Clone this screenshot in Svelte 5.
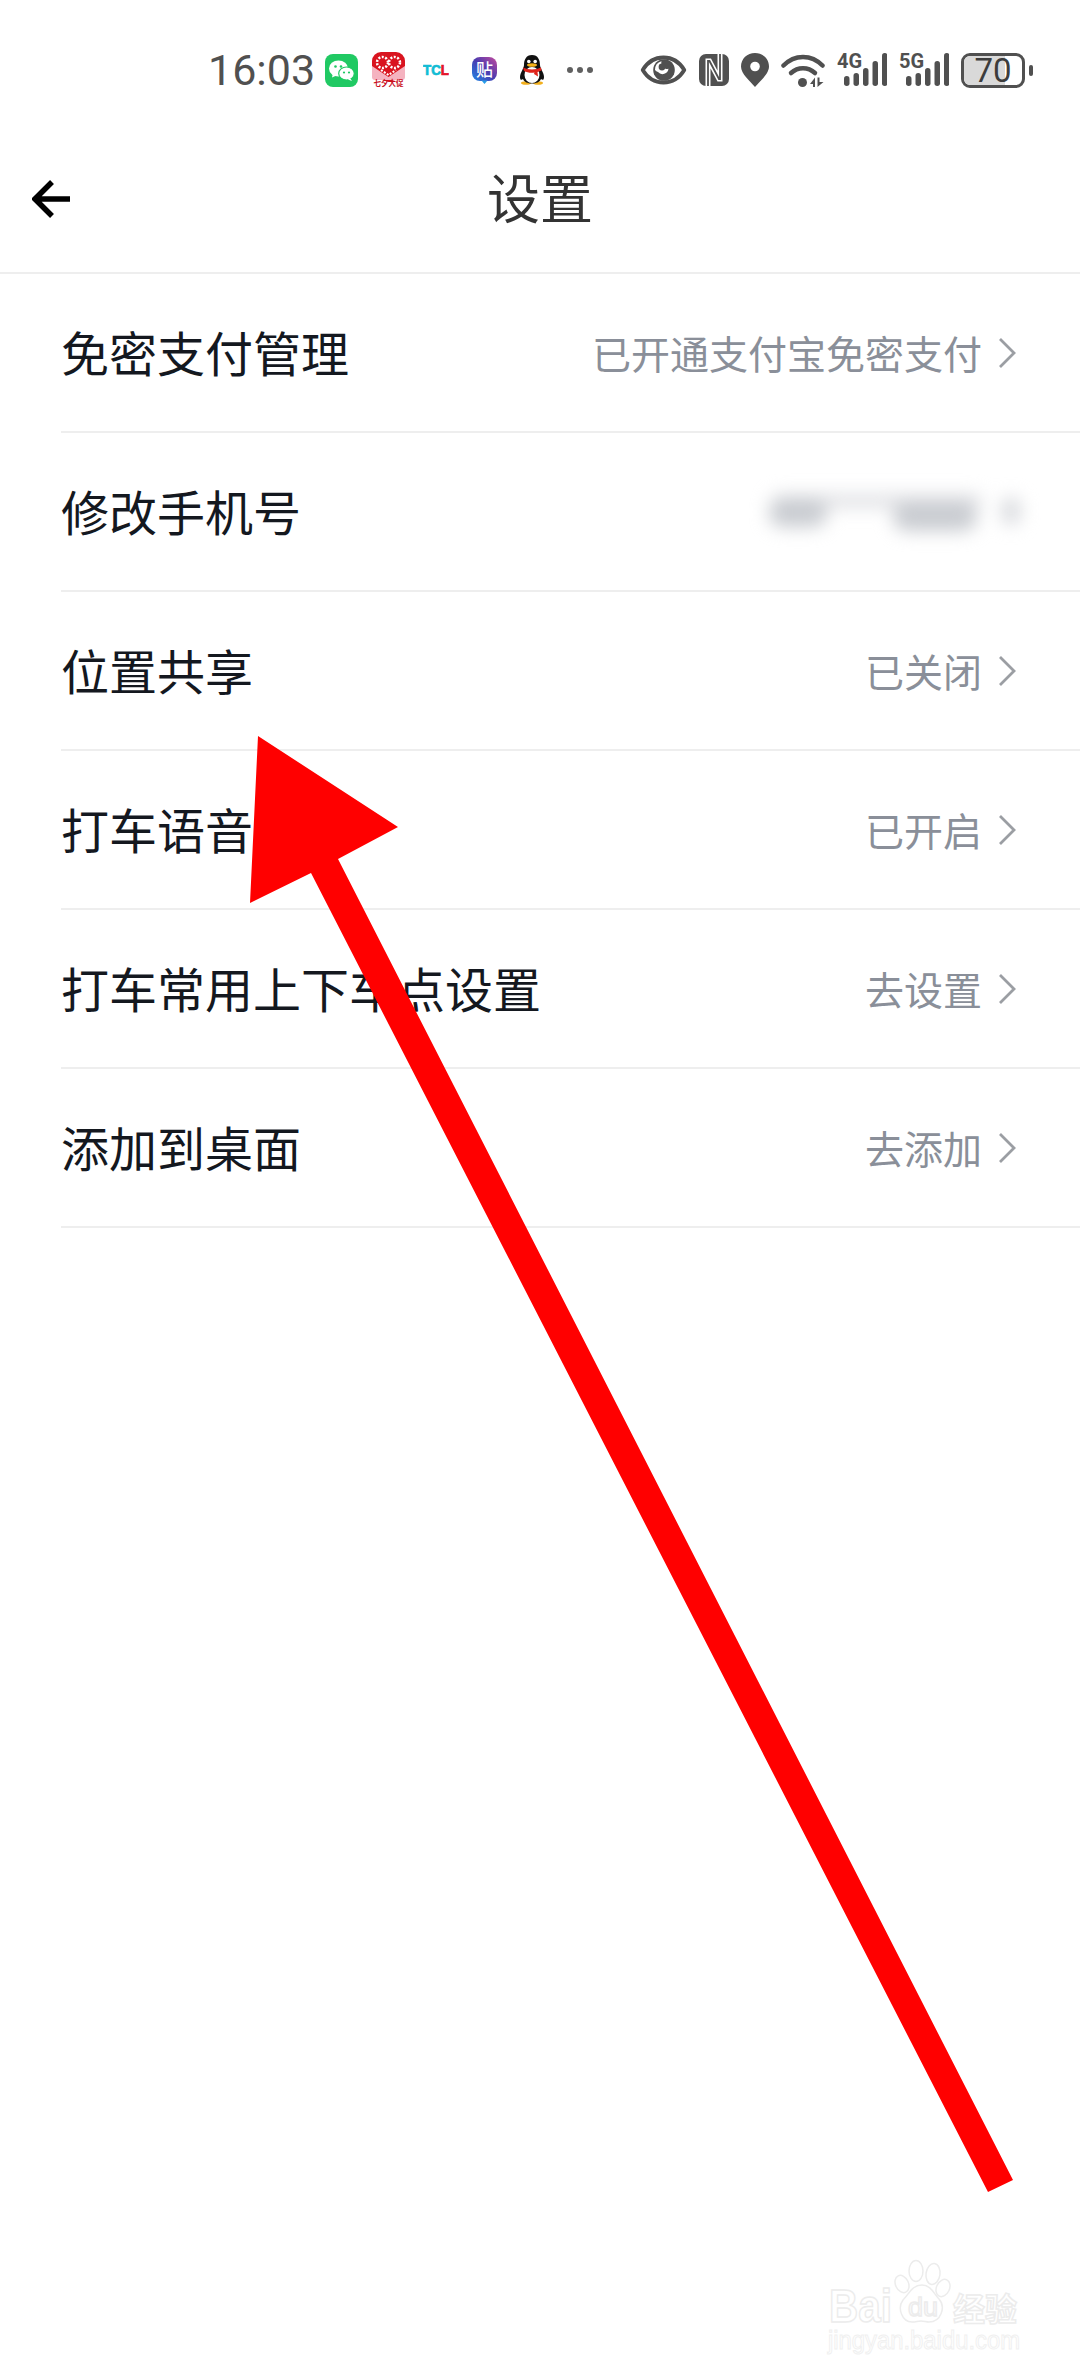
<script lang="ts">
  const rows = [
    { label: "免密支付管理", value: "已开通支付宝免密支付" },
    { label: "修改手机号", masked: true },
    { label: "位置共享", value: "已关闭" },
    { label: "打车语音", value: "已开启" },
    { label: "打车常用上下车点设置", value: "去设置" },
    { label: "添加到桌面", value: "去添加" },
  ];
  const bars = [
    { x: 0, h: 10 },
    { x: 9.5, h: 13 },
    { x: 19, h: 18 },
    { x: 28.5, h: 25 },
    { x: 38, h: 33 },
  ];
</script>

{#snippet signal(name)}
  <svg width="50" height="42" viewBox="0 -4 50 42">
    <text x="0" y="15" class="net">{name}</text>
    {#each bars as bar}
      <rect x={bar.x + 7} y={33 - bar.h} width="5.5" height={bar.h} rx="2.7" fill="#505050" />
    {/each}
  </svg>
{/snippet}

<div class="page">
  <div class="status">
    <div class="status-left">
      <span class="time">16:03</span>
      <svg class="wechat" width="33" height="33" viewBox="0 0 33 33">
        <rect width="33" height="33" rx="8" fill="#20c963" />
        <ellipse cx="13.5" cy="14.5" rx="9.5" ry="8" fill="#fff" />
        <path d="M8 19l-1 4.5 5.5-2.5z" fill="#fff" />
        <ellipse cx="21.5" cy="19.5" rx="7.8" ry="6.5" fill="#fff" stroke="#20c963" stroke-width="1.2" />
        <path d="M25 24l2 3-4-1.5z" fill="#fff" />
        <circle cx="10.5" cy="12.5" r="1.3" fill="#20c963" />
        <circle cx="16" cy="12.5" r="1.3" fill="#20c963" />
        <circle cx="19" cy="18.5" r="1.1" fill="#20c963" />
        <circle cx="24" cy="18.5" r="1.1" fill="#20c963" />
      </svg>
      <svg class="promo" width="33" height="36" viewBox="0 0 33 36">
        <path d="M0 9a9 9 0 0 1 9-9h15a9 9 0 0 1 9 9v16l-16.500 5L0 25z" fill="#d9141f" />
        <path d="M0 14l16.500 11L33 14v11a3 3 0 0 1-3 3H3a3 3 0 0 1-3-3z" fill="#f5b3c0" />
        <circle cx="10.500" cy="10.500" r="5.500" fill="none" stroke="#fff" stroke-width="2.500" stroke-dasharray="2 1.500" />
        <circle cx="22.500" cy="10.500" r="5.500" fill="none" stroke="#fff" stroke-width="2.500" stroke-dasharray="2 1.500" />
        <path d="M9 18l7.500 5 7.500-5" fill="none" stroke="#fff" stroke-width="2" stroke-dasharray="2 1.500" />
        <text x="16.500" y="34" class="promo-text" text-anchor="middle">七夕大促</text>
      </svg>
      <svg class="tcl" width="26" height="20" viewBox="0 -4 26 20">
        <text x="0" y="11" class="tcl-text" textLength="26" lengthAdjust="spacingAndGlyphs"><tspan fill="#12bcd4" stroke="#12bcd4">TC</tspan><tspan fill="#e5162b" stroke="#e5162b">L</tspan></text>
      </svg>
      <svg class="tie" width="25" height="27" viewBox="0 0 25 27">
        <defs>
          <linearGradient id="tieFill" x1="0" y1="1" x2="1" y2="0">
            <stop offset="0" stop-color="#1e88e5" />
            <stop offset="0.5" stop-color="#4a3bb0" />
            <stop offset="1" stop-color="#c74a9c" />
          </linearGradient>
        </defs>
        <rect width="25" height="24" rx="8" fill="url(#tieFill)" />
        <path d="M9.5 23.5h6L12.5 27z" fill="#2a9de8" />
        <text x="12.500" y="18.500" class="tie-text" text-anchor="middle">贴</text>
      </svg>
      <svg class="qq" width="26" height="30" viewBox="0 0 26 30">
        <ellipse cx="7" cy="28" rx="5" ry="1.8" fill="#f2b01e" />
        <ellipse cx="19" cy="28" rx="5" ry="1.8" fill="#f2b01e" />
        <path d="M13 0c6 0 8 5 8 10 0 3 4 8 4 12 0 3-1.500 3.500-3 2-1 3-5 4.500-9 4.500S5 27 4 24c-1.500 1.500-3 1-3-2 0-4 4-9 4-12C5 5 7 0 13 0z" fill="#111" />
        <ellipse cx="13" cy="20" rx="7.5" ry="8" fill="#fff" />
        <circle cx="9.8" cy="6.500" r="1.8" fill="#fff" />
        <circle cx="16.2" cy="6.500" r="1.8" fill="#fff" />
        <ellipse cx="13" cy="10" rx="5" ry="1.8" fill="#f5b21a" />
        <path d="M4 12.500c5 2.500 13 2.500 18 0l.500 3-4 1.500.500 4.500-4-2.500.500-1.500c-3.500.5-7 .3-10.500-1.500z" fill="#e0241b" />
      </svg>
      <span class="dots"><i></i><i></i><i></i></span>
    </div>
    <div class="status-right">
      <svg width="47" height="30" viewBox="0 0 46 30">
        <path d="M2.200 15C7 7 14 2.500 23 2.500S39 7 43.800 15C39 23 32 27.500 23 27.500S7 23 2.200 15z" fill="none" stroke="#505050" stroke-width="3.800" stroke-linejoin="round" />
        <circle cx="23.500" cy="15" r="10.800" fill="#505050" />
        <path d="M14.500 15a9 9 0 0 1 6.500-8.700 6 6 0 0 0 7 7.500A6 6 0 0 1 17.500 17a5 5 0 0 1-3-2z" fill="#fff" />
        <circle cx="21.500" cy="12" r="3.400" fill="#505050" />
      </svg>
      <svg width="30" height="32" viewBox="0 0 30 32">
        <rect width="30" height="32" rx="7" fill="#505050" />
        <path d="M9 32V7h1.500L20 25h1V0" fill="none" stroke="#fff" stroke-width="5" />
        <path d="M9 32V7h1.500L20 25h1V0" fill="none" stroke="#505050" stroke-width="1.800" />
      </svg>
      <svg width="28" height="34" viewBox="0 0 28 34">
        <path d="M14 34C9 28 0 21 0 13.500 0 5.800 6.200 0 14 0s14 5.800 14 13.500C28 21 19 28 14 34z" fill="#505050" />
        <circle cx="14" cy="13.500" r="4.800" fill="#fff" />
      </svg>
      <svg width="44" height="35" viewBox="0 0 44 35">
        <path d="M2.500 12.500c11-11.500 28-11.500 39 0" fill="none" stroke="#505050" stroke-width="4.500" stroke-linecap="round" />
        <path d="M10 20c7-6.500 17-6.500 24 0" fill="none" stroke="#505050" stroke-width="4.500" stroke-linecap="round" />
        <circle cx="21.500" cy="29.500" r="4.500" fill="#505050" />
        <path d="M34 24.500v9.500h-2v-3h-3zM36.500 24.500v9.500l6-5h-4v-4.500z" fill="#505050" />
      </svg>
      {@render signal("4G")}
      {@render signal("5G")}
      <div class="battery">
        <div class="cell">
          <span class="charge"></span>
          <span class="level">70</span>
        </div>
        <span class="cap"></span>
      </div>
    </div>
  </div>

  <header class="nav">
    <svg class="back" width="40" height="40" viewBox="0 0 40 40">
      <path d="M38 20H5M20 3L3 20l17 17" fill="none" stroke="#000" stroke-width="5.500" />
    </svg>
    <div class="title">设置</div>
  </header>

  <div class="list">
    {#each rows as row}
      <div class="row">
        <span class="label">{row.label}</span>
        {#if row.masked}
          <div class="masked">
            <i class="streak"></i>
            <i class="blob-a"></i>
            <i class="blob-b"></i>
            <i class="blob-c"></i>
          </div>
        {:else}
          <span class="value">{row.value}</span>
          <svg class="chevron" width="18" height="32" viewBox="0 0 18 32">
            <path d="M2 2l14 14L2 30" fill="none" stroke="#9b9ea3" stroke-width="2.800" />
          </svg>
        {/if}
      </div>
    {/each}
  </div>

  <svg class="overlay" width="1080" height="2376" viewBox="0 0 1080 2376">
    <g class="mark">
      <text x="829" y="2322" class="mark-bai" textLength="63" lengthAdjust="spacingAndGlyphs">Bai</text>
      <ellipse cx="902" cy="2284" rx="6.500" ry="9" transform="rotate(-25 902 2284)" />
      <ellipse cx="916" cy="2271" rx="7" ry="10.500" />
      <ellipse cx="933" cy="2274" rx="7" ry="10.500" transform="rotate(8 933 2274)" />
      <ellipse cx="943" cy="2288" rx="6.500" ry="9" transform="rotate(25 943 2288)" />
      <path d="M922 2285c9 0 12 9 17 14 7 8 2 23-10 23-3 0-5-1-8-1s-5 1-9 1c-10 0-15-14-9-22 6-6 9-15 19-15z" />
      <text x="908" y="2316" class="mark-du" textLength="30" lengthAdjust="spacingAndGlyphs">du</text>
      <text x="953" y="2321" class="mark-jy">经验</text>
      <text x="828" y="2349" class="mark-url" textLength="192" lengthAdjust="spacingAndGlyphs">jingyan.baidu.com</text>
    </g>
    <polygon
      points="258,736 398,827 338,859 1013,2180 988,2192 311,873 250,903"
      fill="#ff0000"
    />
  </svg>
</div>

<style>
  :global(body) {
    background: #fff;
  }

  .page {
    position: relative;
    width: 1080px;
    height: 2376px;
    overflow: hidden;
    background: #fff;
    font-family: "Noto Sans CJK SC", "Noto Sans", sans-serif;
  }

  .status {
    height: 140px;
    display: flex;
    align-items: center;
    justify-content: space-between;
    padding: 0 47px 0 208px;
    box-sizing: border-box;
  }

  .status-left,
  .status-right {
    display: flex;
    align-items: center;
  }

  .status-right {
    gap: 12px;
  }

  .status svg {
    display: block;
    flex: none;
  }

  .time {
    font-family: Roboto, "Noto Sans", sans-serif;
    font-size: 43px;
    color: #505050;
    width: 105px;
    line-height: 1;
  }

  .wechat {
    margin-left: 12px;
  }

  .promo {
    margin-left: 14px;
  }

  .tcl {
    margin-left: 18px;
  }

  .tie {
    margin-left: 23px;
  }

  .qq {
    margin-left: 22px;
  }

  .tcl-text {
    font: bold 14px "Liberation Sans", sans-serif;
    stroke-width: 0.7;
  }

  .promo-text {
    font: bold 7.5px "Noto Sans CJK SC", sans-serif;
    fill: #c8101e;
  }

  .tie-text {
    font: 500 17px "Noto Sans CJK SC", sans-serif;
    fill: #fff;
  }

  .dots {
    display: flex;
    gap: 4px;
    margin-left: 22px;
  }

  .dots i {
    width: 6px;
    height: 6px;
    border-radius: 50%;
    background: #606060;
  }

  .net {
    font: bold 20px Roboto, sans-serif;
    fill: #505050;
  }

  .battery {
    display: flex;
    align-items: center;
    gap: 4px;
  }

  .cell {
    position: relative;
    width: 64px;
    height: 35px;
    box-sizing: border-box;
    border: 3px solid #505050;
    border-radius: 9px;
    display: flex;
    align-items: center;
    justify-content: center;
  }

  .charge {
    position: absolute;
    left: 0;
    top: 0;
    bottom: 0;
    width: 70%;
    background: #d9d9d9;
    border-radius: 6px 0 0 6px;
  }

  .level {
    position: relative;
    font-family: Roboto, sans-serif;
    font-size: 33px;
    line-height: 1;
    color: #3c3c3c;
  }

  .cap {
    width: 4px;
    height: 11px;
    border-radius: 2px;
    background: #505050;
  }

  .nav {
    height: 134px;
    box-sizing: border-box;
    padding: 0 0 18px 32px;
    display: grid;
    grid-template-columns: 1fr auto 1fr;
    align-items: center;
    border-bottom: 2px solid #eeeeee;
  }

  .back {
    display: block;
    margin-top: 4px;
  }

  .title {
    font-size: 53px;
    line-height: 1;
    color: #333;
    margin-left: -32px;
    margin-bottom: 2px;
  }

  .row {
    height: 159px;
    box-sizing: border-box;
    margin-left: 61px;
    padding-right: 64px;
    display: flex;
    align-items: center;
    border-bottom: 2px solid #eeeeee;
  }

  .label {
    font-size: 48px;
    line-height: 1;
    color: #14181f;
    margin-bottom: 4px;
  }

  .value {
    margin-left: auto;
    font-size: 39px;
    line-height: 1;
    color: #8a8f99;
  }

  .chevron {
    display: block;
    margin-left: 16px;
  }

  .masked {
    position: relative;
    margin-left: auto;
    margin-right: -7px;
    width: 266px;
    height: 54px;
    filter: blur(9px);
  }

  .masked i {
    position: absolute;
    border-radius: 14px;
  }

  .streak {
    left: 15px;
    top: 10px;
    width: 210px;
    height: 12px;
    background: #dcdde1;
  }

  .blob-a {
    left: 12px;
    top: 14px;
    width: 58px;
    height: 28px;
    background: #c9ccd1;
  }

  .blob-b {
    left: 136px;
    top: 18px;
    width: 84px;
    height: 28px;
    background: #c9ccd1;
  }

  .blob-c {
    left: 245px;
    top: 12px;
    width: 18px;
    height: 28px;
    background: #d6d8dc;
  }

  .overlay {
    position: absolute;
    left: 0;
    top: 0;
  }

  .mark {
    fill: #fff;
    stroke: #ececec;
    stroke-width: 1.5;
  }

  .mark-bai {
    font: bold 46px "Liberation Sans", sans-serif;
  }

  .mark-du {
    font: 26px "Liberation Sans", sans-serif;
  }

  .mark-jy {
    font: bold 32px "Noto Sans CJK SC", sans-serif;
  }

  .mark-url {
    font: 26px "Liberation Sans", sans-serif;
    stroke: #f0f0f0;
    stroke-width: 1;
  }
</style>
